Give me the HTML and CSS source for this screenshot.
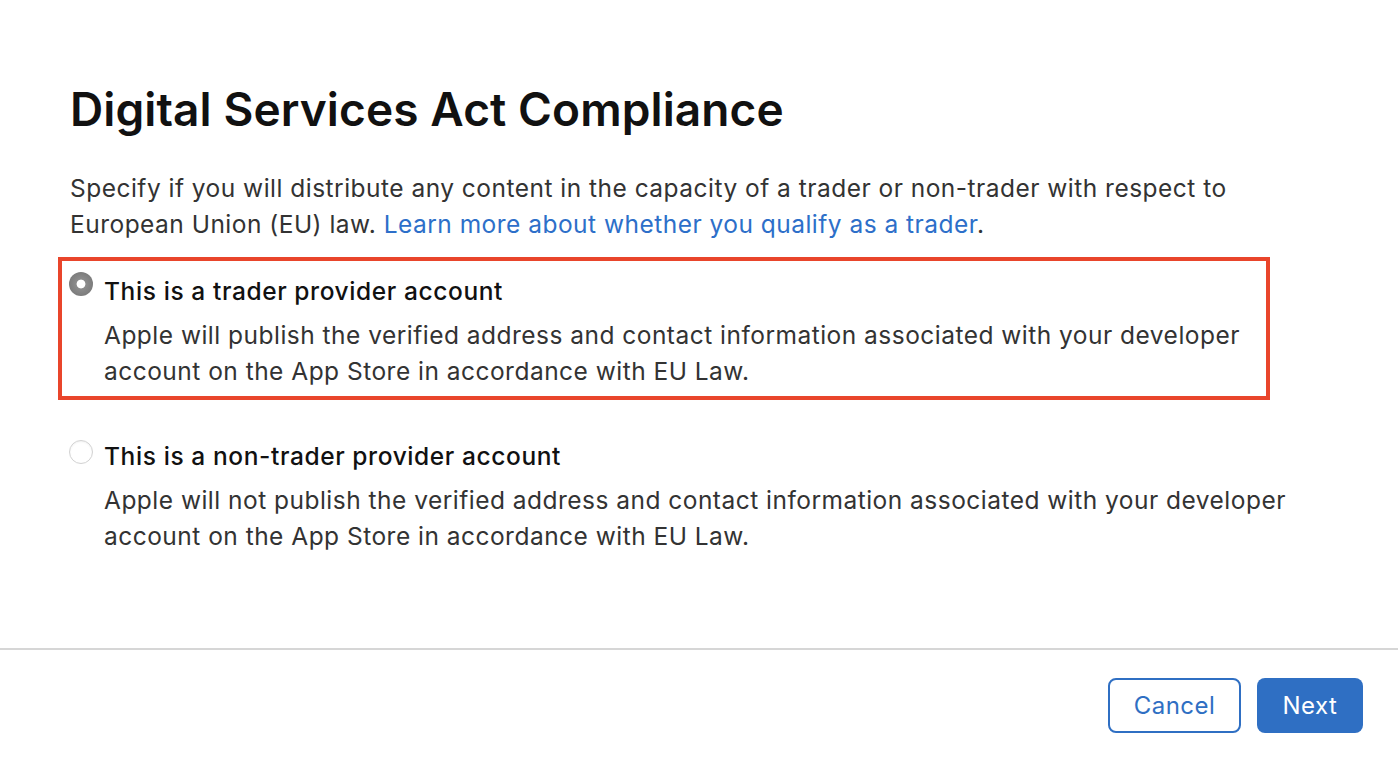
FILE: index.html
```html
<!DOCTYPE html>
<html lang="en">
<head>
    <meta charset="UTF-8">
    <meta name="viewport" content="width=device-width, initial-scale=1.0">
    <title>Digital Services Act Compliance</title>
    <link rel="stylesheet" href="styles.css">
</head>
<body>

    <div class="dialog">
        <div class="content">
            <h1>Digital Services Act Compliance</h1>

            <p class="intro">
                Specify if you will distribute any content in the capacity of a trader or non-trader with respect to<br>
                European Union (EU) law. <a href="#" class="link">Learn more about whether you qualify as a trader</a>.
            </p>

            <div class="option highlighted">
                <span class="radio checked"></span>
                <div class="option-text">
                    <div class="option-title">This is a trader provider account</div>
                    <div class="option-desc">Apple will publish the verified address and contact information associated with your developer<br>account on the App Store in accordance with EU Law.</div>
                </div>
            </div>

            <div class="option">
                <span class="radio"></span>
                <div class="option-text">
                    <div class="option-title">This is a non-trader provider account</div>
                    <div class="option-desc">Apple will not publish the verified address and contact information associated with your developer<br>account on the App Store in accordance with EU Law.</div>
                </div>
            </div>
        </div>

        <div class="footer">
            <button class="btn btn-outline">Cancel</button>
            <button class="btn btn-primary">Next</button>
        </div>
    </div>

</body>
</html>
```

FILE: styles.css
```css
body {
    font-family: 'Inter', sans-serif;
    background-color: #fff;
    margin: 0;
    color: #333;
}

.dialog {
    height: 760px;
    display: flex;
    flex-direction: column;
}

.content {
    padding: 81px 70px 0 70px;
    flex: 1;
}

h1 {
    font-size: 46px;
    font-weight: 600;
    color: #111;
    margin: 0 0 33px 0;
    letter-spacing: 0.1px;
}

.intro {
    font-size: 24.5px;
    letter-spacing: 0.48px;
    line-height: 36px;
    margin: 0 0 15px 0;
    white-space: nowrap;
}

.link {
    color: #2d6fc9;
    text-decoration: none;
}

.option {
    display: flex;
    gap: 11px;
    padding: 10px 0 0 0;
    margin-left: -1px;
    width: 1240px;
}

.option.highlighted {
    border: 4px solid #e9452b;
    margin-left: -12px;
    padding: 12px 20px 7px 7px;
    width: 1177px;
    margin-bottom: 28px;
}

.radio {
    width: 24px;
    height: 24px;
    border-radius: 50%;
    box-sizing: border-box;
    border: 1px solid #d2d2d2;
    background: #fff;
    box-shadow: inset 0 1px 2px rgba(0, 0, 0, 0.06);
    margin-top: 2px;
    flex-shrink: 0;
}

.radio.checked {
    border: none;
    background: radial-gradient(circle, #fff 0, #fff 4px, #8c8c8c 4.8px, #7c7c7c 12px);
    box-shadow: none;
    margin-top: -1px;
}

.option-title {
    font-size: 24.5px;
    letter-spacing: 0.6px;
    font-weight: 500;
    color: #111;
    line-height: 36px;
    margin-bottom: 8px;
}

.option-desc {
    font-size: 24.5px;
    letter-spacing: 0.48px;
    line-height: 36px;
    white-space: nowrap;
}

.footer {
    border-top: 2px solid #d6d6d6;
    display: flex;
    justify-content: flex-end;
    gap: 16px;
    padding: 28px 35px 27px 0;
    height: 55px;
}

.btn {
    font-family: 'Inter', sans-serif;
    font-size: 24px;
    letter-spacing: 0.5px;
    border-radius: 8px;
    height: 55px;
    cursor: pointer;
}

.btn-outline {
    width: 133px;
    background-color: #fff;
    color: #2f6fc3;
    border: 2px solid #2f6fc3;
}

.btn-primary {
    width: 106px;
    background-color: #2f6fc3;
    color: #fff;
    border: none;
}
```
